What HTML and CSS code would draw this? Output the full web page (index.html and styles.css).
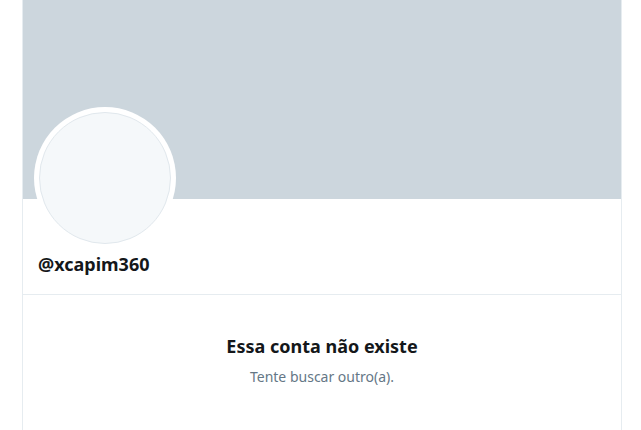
FILE: index.html
```html
<!DOCTYPE html>
<html lang="pt">
<head>
<meta charset="utf-8">
<link rel="stylesheet" href="styles.css">
</head>
<body>
<main class="column">
  <div class="banner"></div>
  <div class="profile">
    <div class="avatar"><div class="avatar-inner"></div></div>
    <div class="handle">@xcapim360</div>
  </div>
  <section class="empty">
    <h2 class="empty-title">Essa conta não existe</h2>
    <p class="empty-sub">Tente buscar outro(a).</p>
  </section>
</main>
</body>
</html>
```
FILE: styles.css
```css
html, body {
  margin: 0;
  padding: 0;
  background: #fff;
  height: 100%;
}
body {
  font-family: "Noto Sans", "Open Sans", sans-serif;
  color: #14171a;
  overflow: hidden;
}
.column {
  margin-left: 22px;
  width: 598px;
  min-height: 430px;
  border-left: 1px solid #e6ecf0;
  border-right: 1px solid #e6ecf0;
}
.banner {
  height: 199px;
  background: #ccd6dd;
}
.profile {
  position: relative;
  height: 96px;
  border-bottom: 1px solid #e6ecf0;
  padding-left: 15px;
  box-sizing: border-box;
}
.avatar {
  position: absolute;
  left: 11px;
  top: -92px;
  width: 142px;
  height: 142px;
  border-radius: 50%;
  background: #fff;
  display: flex;
  align-items: center;
  justify-content: center;
}
.avatar-inner {
  width: 132px;
  height: 132px;
  border-radius: 50%;
  background: #f5f8fa;
  border: 1px solid #e1e8ed;
  box-sizing: border-box;
}
.handle {
  padding-top: 53px;
  font-size: 18px;
  font-weight: 700;
  line-height: 24px;
}
.empty {
  text-align: center;
  padding-top: 38px;
}
.empty-title {
  margin: 0;
  font-size: 18px;
  font-weight: 700;
  line-height: 26px;
}
.empty-sub {
  margin: 8px 0 0;
  font-size: 14px;
  line-height: 20px;
  color: #657786;
}
```
